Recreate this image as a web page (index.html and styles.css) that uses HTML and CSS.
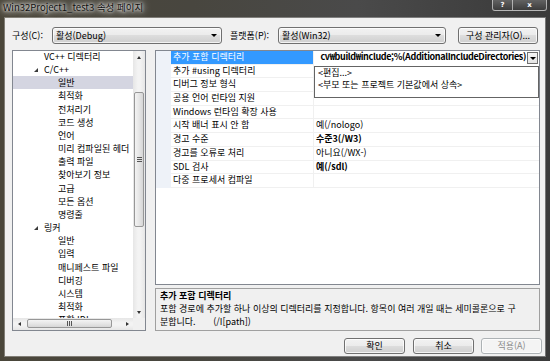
FILE: index.html
```html
<!DOCTYPE html>
<html lang="ko">
<head>
<meta charset="utf-8">
<title>Win32Project1_test3 속성 페이지</title>
<link rel="stylesheet" href="styles.css">
</head>
<body>
<div class="window">
  <div class="titlebar">
    <span class="title">Win32Project1_test3 속성 페이지</span>
    <div class="caption">
      <span class="cbtn help">?</span>
      <span class="cbtn close">x</span>
    </div>
  </div>
  <div class="client">
    <div class="toprow">
      <span class="lbl lbl-cfg">구성(C):</span>
      <div class="combo combo-cfg"><span>활성(Debug)</span><i class="tri-down"></i></div>
      <span class="lbl lbl-plat">플랫폼(P):</span>
      <div class="combo combo-plat"><span>활성(Win32)</span><i class="tri-down"></i></div>
      <div class="btn btn-mgr">구성 관리자(O)...</div>
    </div>

    <div class="main">
      <div class="tree">
        <div class="tree-list">
          <div class="ti l1">VC++ 디렉터리</div>
          <div class="ti l1"><i class="expander"></i>C/C++</div>
          <div class="ti l2 sel">일반</div>
          <div class="ti l2">최적화</div>
          <div class="ti l2">전처리기</div>
          <div class="ti l2">코드 생성</div>
          <div class="ti l2">언어</div>
          <div class="ti l2">미리 컴파일된 헤더</div>
          <div class="ti l2">출력 파일</div>
          <div class="ti l2">찾아보기 정보</div>
          <div class="ti l2">고급</div>
          <div class="ti l2">모든 옵션</div>
          <div class="ti l2">명령줄</div>
          <div class="ti l1"><i class="expander"></i>링커</div>
          <div class="ti l2">일반</div>
          <div class="ti l2">입력</div>
          <div class="ti l2">매니페스트 파일</div>
          <div class="ti l2">디버깅</div>
          <div class="ti l2">시스템</div>
          <div class="ti l2">최적화</div>
          <div class="ti l2">포함 IDL</div>
        </div>
        <div class="vscroll">
          <div class="sarrow"><i class="tri-up"></i></div>
          <div class="vgap"></div>
          <div class="vthumb"><i class="grip-h"></i></div>
          <div class="sfill"></div>
          <div class="sarrow"><i class="tri-down-s"></i></div>
        </div>
        <div class="hscroll">
          <div class="sarrow"><i class="tri-left"></i></div>
          <div class="hgap"></div>
          <div class="hthumb"><i class="grip-v"></i></div>
          <div class="sfill"></div>
          <div class="sarrow"><i class="tri-right"></i></div>
        </div>
        <div class="corner"></div>
      </div>

      <div class="right">
        <div class="props">
          <div class="prow">
            <div class="gut"></div>
            <div class="pname selrow">추가 포함 디렉터리</div>
            <div class="pval editval">
              <div class="editclip"><span class="edittext">cv₩build₩include;%(AdditionalIncludeDirectories)</span></div>
              <div class="ddbtn"><i class="tri-down"></i></div>
            </div>
          </div>
          <div class="prow"><div class="gut"></div><div class="pname">추가 #using 디렉터리</div><div class="pval"></div></div>
          <div class="prow"><div class="gut"></div><div class="pname">디버그 정보 형식</div><div class="pval"></div></div>
          <div class="prow"><div class="gut"></div><div class="pname">공용 언어 런타임 지원</div><div class="pval"></div></div>
          <div class="prow"><div class="gut"></div><div class="pname">Windows 런타임 확장 사용</div><div class="pval"></div></div>
          <div class="prow"><div class="gut"></div><div class="pname">시작 배너 표시 안 함</div><div class="pval">예(/nologo)</div></div>
          <div class="prow"><div class="gut"></div><div class="pname">경고 수준</div><div class="pval bold">수준3(/W3)</div></div>
          <div class="prow"><div class="gut"></div><div class="pname">경고를 오류로 처리</div><div class="pval">아니요(/WX-)</div></div>
          <div class="prow"><div class="gut"></div><div class="pname">SDL 검사</div><div class="pval bold">예(/sdl)</div></div>
          <div class="prow"><div class="gut"></div><div class="pname">다중 프로세서 컴파일</div><div class="pval"></div></div>

          <div class="popup">
            <div class="popitem">&lt;편집...&gt;</div>
            <div class="popitem">&lt;부모 또는 프로젝트 기본값에서 상속&gt;</div>
          </div>
        </div>
        <div class="desc">
          <div class="desc-title">추가 포함 디렉터리</div>
          <div class="desc-line">포함 경로에 추가할 하나 이상의 디렉터리를 지정합니다. 항목이 여러 개일 때는 세미콜론으로 구</div>
          <div class="desc-line">분합니다.&nbsp;&nbsp;&nbsp;&nbsp;&nbsp;&nbsp;&nbsp;(/I[path])</div>
        </div>
      </div>
    </div>

    <div class="buttons">
      <div class="btn btn-ok">확인</div>
      <div class="btn btn-cancel">취소</div>
      <div class="btn btn-apply disabled">적용(A)</div>
    </div>
  </div>
</div>
</body>
</html>
```

FILE: styles.css
```css
* { box-sizing: border-box; }
html, body { margin: 0; padding: 0; }
body {
  width: 550px;
  height: 361px;
  overflow: hidden;
  font-family: "Noto Sans CJK KR", "Noto Sans", sans-serif;
  font-size: 9px;
  color: #000;
}
i { display: block; font-style: normal; }

.window {
  width: 550px;
  height: 361px;
  display: flex;
  flex-direction: column;
  background: linear-gradient(90deg, #4a463a 0%, #48463f 35%, #4a4a4a 65%, #3a3a3a 100%);
}

/* title bar */
.titlebar { height: 18px; display: flex; align-items: flex-start; }
.title {
  margin: 1px 0 0 3px;
  line-height: 12px;
  font-size: 9.5px;
  color: #111;
  white-space: nowrap;
  text-shadow: 0 0 3px #fff, 0 0 6px #fff, 0 0 10px rgba(255,255,255,.85);
}
.caption { margin-left: auto; margin-right: 3px; display: flex; }
.cbtn {
  height: 11px;
  border: 1px solid rgba(255,255,255,.55);
  border-top: 0;
  color: #fff;
  font-family: "DejaVu Sans", sans-serif;
  font-weight: 700;
  font-size: 7px;
  line-height: 10px;
  text-align: center;
  background: linear-gradient(#626262, #3c3c3c);
}
.help { width: 21px; border-radius: 0 0 0 3px; }
.close { width: 34px; border-left: 0; border-radius: 0 0 3px 0; }

/* client */
.client {
  flex: 1;
  margin: 0 5px 5px 5px;
  background: #f0f0f0;
  padding: 9px 5px 0 7px;
  box-shadow: 0 0 0 1px rgba(255,255,255,.3);
  display: flex;
  flex-direction: column;
}

.toprow { height: 17px; display: flex; align-items: center; }
.lbl { line-height: 17px; white-space: nowrap; }
.lbl-cfg { width: 40px; }
.lbl-plat { width: 48px; margin-left: 8px; }

.combo, .btn {
  height: 17px;
  border: 1px solid #707070;
  border-radius: 3px;
  background: linear-gradient(#f2f2f2 0%, #ebebeb 50%, #dddddd 50%, #cfcfcf 100%);
  box-shadow: inset 0 0 0 1px rgba(255,255,255,.75);
  line-height: 15px;
  white-space: nowrap;
}
.combo { display: flex; align-items: center; padding-left: 3px; }
.combo-cfg { width: 170px; }
.combo-plat { width: 168px; }
.tri-down {
  width: 0; height: 0;
  border-left: 3px solid transparent;
  border-right: 3px solid transparent;
  border-top: 3px solid #000;
  margin-left: auto;
  margin-right: 4px;
}
.btn { text-align: center; }
.btn-mgr { width: 80px; margin-left: 12px; }

/* main */
.main { margin-top: 6px; height: 281px; display: flex; gap: 9px; }

.tree {
  width: 134px;
  border: 1px solid #828790;
  background: #fff;
  display: grid;
  grid-template-columns: 1fr 12px;
  grid-template-rows: 1fr 12px;
}
.tree-list { overflow: hidden; min-width: 0; min-height: 0; }
.ti {
  height: 13.16px;
  line-height: 13.16px;
  white-space: nowrap;
  display: flex;
  align-items: center;
}
.ti:first-child { margin-top: -1px; }
.l1 { padding-left: 31px; }
.l2 { padding-left: 45px; }
.sel { background: #d4d5e1; }
.expander {
  width: 0; height: 0;
  border-style: solid;
  border-width: 0 0 4px 4px;
  border-color: transparent transparent #3a3a3a transparent;
  margin-left: -10px;
  margin-right: 6px;
  margin-top: 1px;
}

.vscroll {
  display: flex;
  flex-direction: column;
  background: linear-gradient(90deg, #e6e6e6, #f3f3f3 40%, #f3f3f3 60%, #e6e6e6);
}
.hscroll {
  display: flex;
  background: linear-gradient(#e6e6e6, #f3f3f3 40%, #f3f3f3 60%, #e6e6e6);
}
.corner { background: #f0f0f0; }
.sarrow { width: 12px; height: 12px; display: flex; align-items: center; justify-content: center; flex: none; }
.sfill { flex: 1; }
.vgap { height: 29px; }
.hgap { width: 2px; }
.vthumb {
  height: 135px;
  margin: 0 1px;
  border: 1px solid #979797;
  border-radius: 2px;
  background: linear-gradient(90deg, #f3f3f3, #e6e6e6 50%, #d6d6d6);
  display: flex; align-items: center; justify-content: center;
}
.hthumb {
  width: 85px;
  margin: 1px 0 2px;
  border: 1px solid #979797;
  border-radius: 2px;
  background: linear-gradient(#f3f3f3, #e6e6e6 50%, #d6d6d6);
  display: flex; align-items: center; justify-content: center;
}
.grip-h {
  width: 5px; height: 5px;
  background: repeating-linear-gradient(#555 0 1px, transparent 1px 2px);
}
.grip-v {
  width: 5px; height: 5px;
  background: repeating-linear-gradient(90deg, #555 0 1px, transparent 1px 2px);
}
.tri-up { width: 0; height: 0; border-left: 2.5px solid transparent; border-right: 2.5px solid transparent; border-bottom: 3px solid #333; }
.tri-down-s { width: 0; height: 0; border-left: 2.5px solid transparent; border-right: 2.5px solid transparent; border-top: 3px solid #333; }
.tri-left { width: 0; height: 0; border-top: 2.5px solid transparent; border-bottom: 2.5px solid transparent; border-right: 3px solid #333; }
.tri-right { width: 0; height: 0; border-top: 2.5px solid transparent; border-bottom: 2.5px solid transparent; border-left: 3px solid #333; }

/* property grid */
.right { flex: 1; display: flex; flex-direction: column; min-width: 0; }
.props {
  position: relative;
  height: 235px;
  border: 1px solid #828790;
  background: #fff;
}
.prow {
  display: grid;
  grid-template-columns: 15px 143px 1fr;
  height: 13.7px;
}
.gut { background: #eef2f8; }
.pname, .pval {
  border-bottom: 1px solid #f0f0f0;
  line-height: 12.7px;
  white-space: nowrap;
  overflow: hidden;
  padding-left: 2px;
}
.pname { border-right: 1px solid #f0f0f0; }
.selrow { background: #3399ff; color: #fff; }
.bold { font-weight: 700; }
.editval { display: flex; padding-left: 0; border-bottom-color: #fff; }
.editclip {
  flex: 1;
  min-width: 0;
  overflow: hidden;
  display: flex;
  justify-content: flex-end;
  padding-right: 1px;
}
.edittext { font-weight: 700; white-space: nowrap; flex: none; letter-spacing: -0.35px; }
.ddbtn {
  width: 11px;
  height: 12px;
  margin: 1px 1px 0 0;
  border: 1px solid #707070;
  background: linear-gradient(#f6f6f6, #e4e4e4);
  display: flex;
  align-items: center;
}
.ddbtn .tri-down { margin: 0 auto; }

.popup {
  position: absolute;
  left: 158px;
  top: 15px;
  right: 0;
  height: 32px;
  border: 1px solid #646464;
  background: #fff;
  padding: 0 0 0 3px;
}
.popitem { line-height: 12.3px; white-space: nowrap; }

.desc {
  margin-top: 3px;
  height: 43px;
  border: 1px solid #a0a0a0;
  background: #f0f0f0;
  padding: 0 0 0 4px;
}
.desc-title, .desc-line { line-height: 13px; white-space: nowrap; overflow: hidden; }
.desc-title { font-weight: 700; }

/* bottom buttons */
.buttons {
  margin-top: 7px;
  margin-right: -2px;
  height: 16px;
  display: flex;
  justify-content: flex-end;
}
.buttons .btn { width: 61px; height: 16px; line-height: 14px; }
.btn-ok { margin-right: 8px; }
.btn-cancel { margin-right: 7px; }
.disabled {
  color: #8a8a8a;
  border-color: #adb2b5;
  background: #f4f4f4;
}
```
